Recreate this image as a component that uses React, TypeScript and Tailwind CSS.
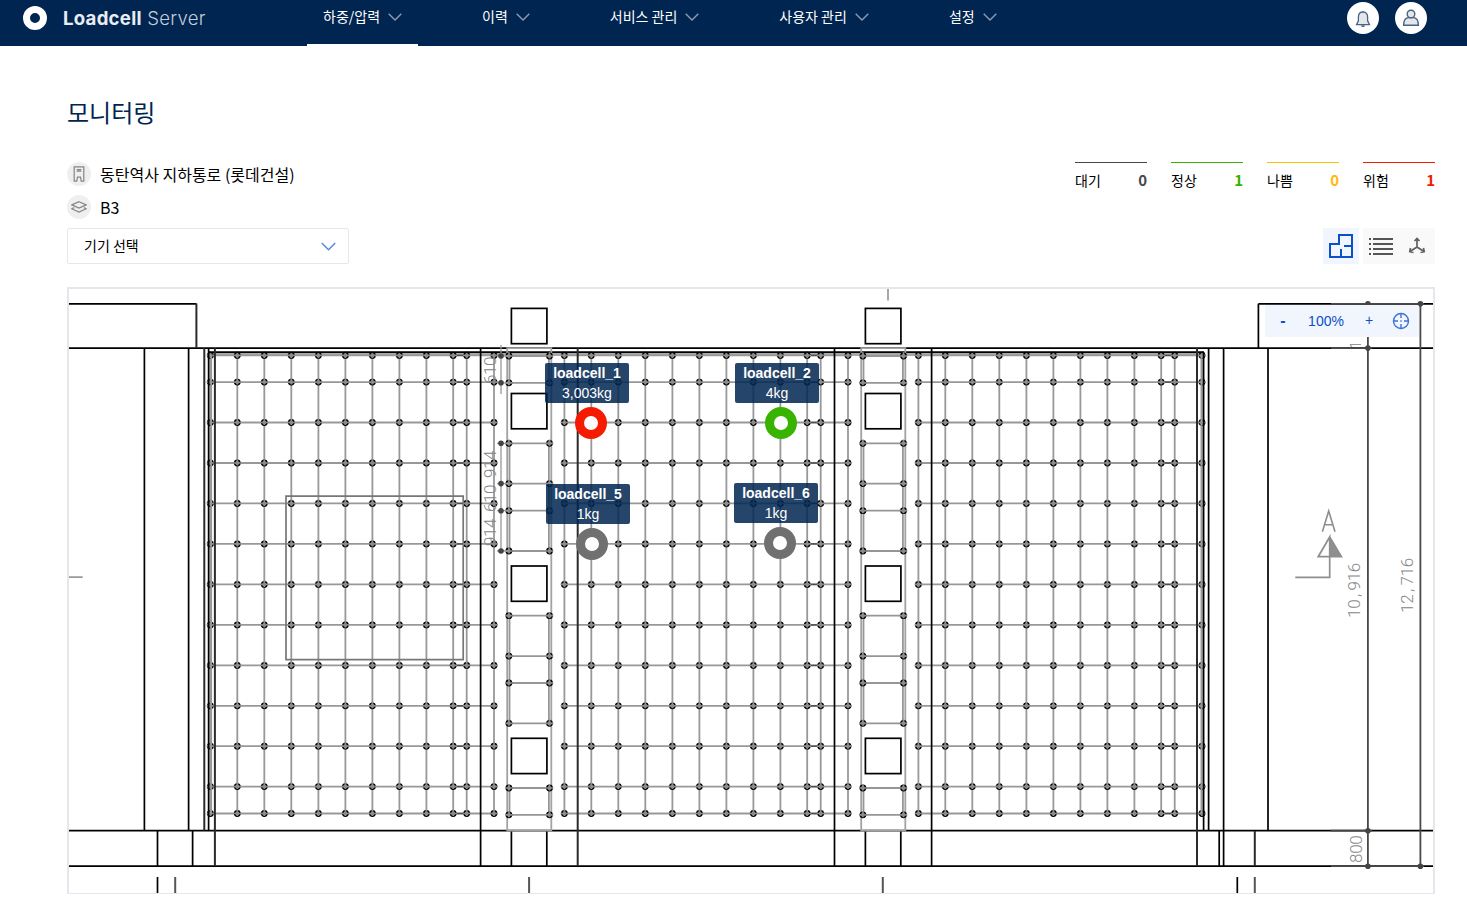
import React from 'react';

const NAV = [
  { label: '하중/압력', active: true },
  { label: '이력', active: false },
  { label: '서비스 관리', active: false },
  { label: '사용자 관리', active: false },
  { label: '설정', active: false },
];

const STATS = [
  { label: '대기', value: 0, border: 'border-[#44474d]', text: 'text-[#44474d]' },
  { label: '정상', value: 1, border: 'border-[#38b000]', text: 'text-[#38b000]' },
  { label: '나쁨', value: 0, border: 'border-[#ffc107]', text: 'text-[#ffb90a]' },
  { label: '위험', value: 1, border: 'border-[#f51b00]', text: 'text-[#f51b00]' },
];

const SENSORS = [
  { name: 'loadcell_1', value: '3,003kg', box: 'left-[476px] top-[74px]', ring: 'border-[#f61a00]' },
  { name: 'loadcell_2', value: '4kg', box: 'left-[666px] top-[74px]', ring: 'border-[#38b300]' },
  { name: 'loadcell_5', value: '1kg', box: 'left-[477px] top-[195px]', ring: 'border-[#707070]' },
  { name: 'loadcell_6', value: '1kg', box: 'left-[665px] top-[194px]', ring: 'border-[#707070]' },
];

const GRID_COLS = [210.4, 237.3, 264.3, 291.3, 318.4, 345.4, 372.4, 399.4, 426.4, 453.2, 466.7, 494];
const GRID_ROWS = [355.4, 382.1, 422.5, 463, 503.4, 543.9, 584.4, 624.9, 665.4, 705.8, 746.2, 786.6, 813.5];
const STRIP_GROUPS = [
  [356, 382.8],
  [443.3, 483.6, 510.7, 551],
  [615.7, 656.1, 683, 723.3],
  [788, 814.8],
];
const STRIP_SQUARES = [308.4, 393.5, 566, 738.3];
const BAY = 354;

function Chevron({ className, w = 14, h = 8 }: { className: string; w?: number; h?: number }) {
  return (
    <svg className={className} width={w} height={h} viewBox="0 0 14 8" fill="none" stroke="currentColor" strokeWidth="1.4">
      <path d="M0.7 0.7 7 7 13.3 0.7" />
    </svg>
  );
}

function Node({ x, y }: { x: number; y: number }) {
  return (
    <g>
      <circle cx={x} cy={y} r="2.7" fill="#8f8f8f" stroke="#000" strokeWidth="1.4" />
      <path d={`M${x - 3.8} ${y}H${x + 3.8}M${x} ${y - 3.8}V${y + 2.5}`} stroke="#8c8c8c" strokeWidth="1.7" />
    </g>
  );
}

// Drafting-style dimension text: every character takes the same advance.
function Dim({ x, y, len, text }: { x: number; y: number; len: number; text: string }) {
  const advance = len / text.length;
  const xs = text
    .split('')
    .map((ch, i) => (i * advance + (ch === ',' ? 2.8 : 0)).toFixed(2))
    .join(' ');
  return (
    <text
      transform={`translate(${x} ${y}) rotate(-90)`}
      x={xs}
      fontSize="17"
      fontWeight="300"
      fontFamily="Roboto, sans-serif"
      fill="#868686"
    >
      {text}
    </text>
  );
}

function Bay({ dx }: { dx: number }) {
  const cols = GRID_COLS.map((c) => c + dx);
  const x0 = cols[0];
  const x1 = cols[cols.length - 1];
  return (
    <g>
      <g stroke="#989898" strokeWidth="1.8">
        {cols.map((x) => (
          <path key={x} d={`M${x} 355V814`} />
        ))}
        {GRID_ROWS.map((y) => (
          <path key={y} d={`M${x0 - 3} ${y}H${x1 + 3}`} />
        ))}
      </g>
      {GRID_ROWS.map((y) => (
        <path key={y} d={`M${cols[9]} ${y}H${cols[10]}`} stroke="#4d4d4d" strokeWidth="1.5" />
      ))}
      {GRID_ROWS.map((y) => cols.map((x) => <Node key={`${x}-${y}`} x={x} y={y} />))}
    </g>
  );
}

function Strip({ dx }: { dx: number }) {
  const l = 508.9 + dx;
  const r = 549.5 + dx;
  return (
    <g>
      <path d={`M${l - 1.7} 348.2H${r + 1.8}V830.5H${l - 1.7}Z`} stroke="#a2a2a2" strokeWidth="1.8" />
      {STRIP_GROUPS.map((ys) => (
        <g key={ys[0]}>
          <g stroke="#969696" strokeWidth="1.8">
            <path d={`M${l + 0.6} ${ys[0]}V${ys[ys.length - 1]}M${r - 0.6} ${ys[0]}V${ys[ys.length - 1]}`} />
            {ys.map((y) => (
              <path key={y} d={`M${l} ${y}H${r}`} />
            ))}
          </g>
          {ys.map((y) => (
            <g key={y}>
              <Node x={l} y={y} />
              <Node x={r} y={y} />
            </g>
          ))}
        </g>
      ))}
      {STRIP_SQUARES.map((y) => (
        <rect key={y} x={511.4 + dx} y={y} width="35.5" height="35.3" stroke="#000" strokeWidth="1.7" />
      ))}
    </g>
  );
}

function FloorPlan() {
  return (
    <svg className="block h-full w-full" viewBox="69 289 1364 604" fill="none">
      <path d="M209 354.3H1203" stroke="#a8a8a8" strokeWidth="3.6" />
      <Bay dx={0} />
      <Bay dx={BAY} />
      <Bay dx={BAY * 2} />
      <g stroke="#000" strokeWidth="1.7">
        <path d="M69 303.8H196.5M1258.4 303.8H1433M69 348.1H1433M208 352.1H1204M69 830.7H1433M69 866.2H1433" />
        <path d="M144.4 348V830.5M188.6 348V830.5M208.6 348V830.5M157.5 831V866M192.6 831V866M157.5 877V893" />
        <path d="M480.6 348V866M834.5 348V866M931.6 348V866M511.4 831V866M546.8 831V866M865.4 831V866M900.8 831V866" />
        <path d="M1203.6 352V830.5M1208.6 348V830.5M1223.6 348V866M1268 348V830.5M1237.3 877V893M1258.4 303.8V348M1219.2 831V866" />
      </g>
      <g stroke="#2b2b2b" strokeWidth="2">
        <path d="M196.4 303.5V348M204.3 348V830.5M214.9 348V866M577.7 348V866M1197 348V866M1254.8 831V866" />
        <path d="M175.2 877V893M529.1 877V893M882.8 877V893M1254.8 877V893" stroke="#555" />
      </g>
      <path d="M1201.4 355V814M211.2 355V814" stroke="#999" strokeWidth="1.8" />
      <Strip dx={0} />
      <Strip dx={BAY} />
      <path d="M888 289V300.5M69 577.2H82.7" stroke="#999" strokeWidth="1.7" />
      <path d="M286 496.2H463.2V659.6H286Z" stroke="#777" strokeWidth="1.7" />

      <path d="M501 345V394M501 443V551M497 356H509M497 382.8H509M497 443.3H509M497 483.6H509M497 510.7H509M497 551H509" stroke="#999" strokeWidth="1.3" />
      {[356, 382.8, 443.3, 483.6, 510.7, 551].map((y) => (
        <circle key={y} cx="501" cy={y} r="2.8" fill="#444" />
      ))}
      <Dim x={495.6} y={384} len={27} text="610" />
      <Dim x={495.6} y={478} len={27} text="914" />
      <Dim x={495.6} y={512} len={27} text="610" />
      <Dim x={495.6} y={546} len={27} text="914" />

      <g stroke="#484848" strokeWidth="1.8">
        <path d="M1367.9 303.8V866M1420.4 303.8V866M1331 303.8H1424M1331 348.1H1372M1331 830.7H1372M1331 866.2H1424" />
      </g>
      {[
        [1367.9, 303.8],
        [1420.4, 303.8],
        [1367.9, 348.1],
        [1367.9, 830.7],
        [1367.9, 866.2],
        [1420.4, 866.2],
      ].map(([x, y]) => (
        <circle key={`${x}-${y}`} cx={x} cy={y} r="2.8" fill="#444" />
      ))}
      <Dim x={1359.6} y={618} len={55} text="10,916" />
      <Dim x={1412.6} y={613} len={55} text="12,716" />
      <Dim x={1362.3} y={863} len={27.5} text="800" />
      <path d="M1350 344.5H1361M1350 344.5L1352 347" stroke="#999" strokeWidth="1.2" />

      <path d="M1322.4 531.7 1328.7 511 1335 531.7M1324.5 524.8H1333" stroke="#8e8e8e" strokeWidth="1.6" />
      <path d="M1295.3 577.3H1329.7V537L1318.2 556.7H1341.4L1329.7 537" stroke="#8e8e8e" strokeWidth="1.7" />
      <path d="M1329.7 537V556.7H1341.4Z" fill="#8e8e8e" />
    </svg>
  );
}

export default function App() {
  return (
    <div className="flex h-[914px] w-full flex-col overflow-hidden bg-white font-['Noto_Sans_CJK_KR',sans-serif] text-black">
      <header className="flex h-[46px] shrink-0 bg-[#002550] text-white">
        <div className="flex h-9 w-[307px] items-center pl-[23px]">
          <span className="h-6 w-6 rounded-full border-[7px] border-white" />
          <span className="ml-[16px] whitespace-nowrap font-['Inter',sans-serif] text-[18.6px] font-light leading-6 tracking-[0.25px] text-[#c3cdd9]">
            <b className="font-bold text-[#e8edf3]">Loadcell</b> Server
          </span>
        </div>
        <nav className="flex gap-12">
          {NAV.map((n) => (
            <div
              key={n.label}
              className={`flex h-[46px] items-start gap-2 border-b-2 px-4 pt-[6px] ${n.active ? 'border-white' : 'border-transparent'}`}
            >
              <span className="whitespace-nowrap text-sm leading-5">{n.label}</span>
              <Chevron className="mt-[7px] text-[#8b9bb0]" />
            </div>
          ))}
        </nav>
        <div className="ml-auto mr-10 flex gap-4 pt-[2px]">
          <div className="flex h-8 w-8 items-center justify-center rounded-full bg-white">
            <svg className="mt-0.5" width="16" height="18" viewBox="0 0 16 18" fill="#e3e7ec" stroke="#4b6485" strokeWidth="1.3">
              <path d="M6.5 15.5C7 16.8 9 16.8 9.5 15.5" fill="#58708f" />
              <path d="M8 0.9V2M8 2C4.8 2 3.4 4.2 3.4 7V10.800L1.500 14.700H14.500L12.600 10.800V7C12.600 4.200 11.200 2 8 2Z" />
            </svg>
          </div>
          <div className="flex h-8 w-8 items-center justify-center rounded-full bg-white">
            <svg width="18" height="18" viewBox="0 0 18 18" fill="#e3e7ec" stroke="#4b6485" strokeWidth="1.4">
              <path d="M1.6 16.3C1.6 11.8 3.6 9 6.2 8.6H11.8C14.4 9 16.4 11.8 16.4 16.3Z" />
              <circle cx="9" cy="5" r="3.8" />
            </svg>
          </div>
        </div>
      </header>

      <main className="flex flex-col pl-[67px] pr-8">
        <h1 className="mt-12 h-9 text-2xl leading-9 text-[#002550]">모니터링</h1>

        <div className="mt-8 flex h-[102px] justify-between">
          <div className="flex flex-col">
            <div className="flex h-6 items-center gap-[9px]">
              <span className="flex h-6 w-6 items-center justify-center rounded-full bg-[#efefef]">
                <svg width="12" height="16" viewBox="0 0 12 16" fill="none" stroke="#858585" strokeWidth="1.2">
                  <path d="M1.2 15.2V0.8H10.8V15.2H8.200L7.500 11.200H4.500L3.800 15.200Z" />
                  <path d="M3.7 3.7H8.3M3.7 5.2H8.3" />
                </svg>
              </span>
              <span className="text-base leading-6">동탄역사 지하통로 (롯데건설)</span>
            </div>
            <div className="mt-[9px] flex h-6 items-center gap-[9px]">
              <span className="flex h-6 w-6 items-center justify-center rounded-full bg-[#efefef]">
                <svg width="16" height="12" viewBox="0 0 16 12" fill="none" stroke="#858585" strokeWidth="1.2">
                  <path d="M8 0.7 15.2 3.9 8 7.1 0.8 3.9Z" />
                  <path d="M3.2 6.6 0.8 7.8 8 11 15.2 7.8 12.8 6.6" />
                </svg>
              </span>
              <span className="text-base leading-6">B3</span>
            </div>
            <div className="mt-[9px] flex h-9 w-[282px] items-center justify-between rounded-[2px] border border-[#e4e7ec] pl-4 pr-3">
              <span className="pb-[2px] text-sm leading-5">기기 선택</span>
              <Chevron className="text-[#5b87df]" w={15} h={9} />
            </div>
          </div>

          <div className="flex flex-col items-end justify-between">
            <div className="flex gap-6">
              {STATS.map((s) => (
                <div key={s.label} className={`flex w-[72px] items-center justify-between border-t pt-[7px] ${s.border}`}>
                  <span className="text-sm leading-5">{s.label}</span>
                  <b className={`text-[15px] font-bold leading-5 ${s.text}`}>{s.value}</b>
                </div>
              ))}
            </div>
            <div className="flex">
              <div className="mr-1 flex h-9 w-9 items-center justify-center bg-[#f1f5fd]">
                <svg width="24" height="24" viewBox="0 0 24 24" fill="none" stroke="#0b50c8" strokeWidth="2">
                  <path d="M10 1H23V23H1V10H10ZM12 15V23M15 12H23" />
                </svg>
              </div>
              <div className="flex h-9 w-9 items-center justify-center bg-[#f9f9f9]">
                <svg width="24" height="18" viewBox="0 0 24 18" stroke="#555" strokeWidth="2">
                  <path d="M0 2H2M4 2H24M0 7H2M4 7H24M0 12H2M4 12H24M0 17H2M4 17H24" />
                </svg>
              </div>
              <div className="flex h-9 w-9 items-center justify-center bg-[#f9f9f9]">
                <svg width="18" height="18" viewBox="0 0 18 18" fill="none" stroke="#606060" strokeWidth="1.7">
                  <path d="M9 1.500V10M6.500 4 9 1.500 11.500 4M9 10 2 14.500M2.500 11 1.800 14.700 5.500 15.500M9 10 16 14.500M15.500 11 16.200 14.700 12.500 15.500" />
                </svg>
              </div>
            </div>
          </div>
        </div>

        <section className="relative mt-[23px] h-[607px] w-full border-2 border-b border-[#e4e7ec]">
          <FloorPlan />
          {SENSORS.map((s) => (
            <div key={s.name} className={`absolute flex w-[84px] flex-col items-center font-['Liberation_Sans',sans-serif] ${s.box}`}>
              <div className="h-10 w-full rounded-[2px] bg-[#002550]/85 text-center text-white">
                <div className="text-[14px] font-bold leading-5">{s.name}</div>
                <div className="text-[14px] leading-5">{s.value}</div>
              </div>
              <div className={`ml-2 mt-1 h-8 w-8 rounded-full border-[9px] bg-white ${s.ring}`} />
            </div>
          ))}
          <div className="absolute right-[14px] top-4 flex h-8 w-[154px] items-center rounded-[2px] bg-[#f1f5fd] font-['Liberation_Sans',sans-serif] text-sm text-[#0b50c8]">
            <span className="w-9 text-center text-base font-bold">-</span>
            <span className="w-[50px] text-center">100%</span>
            <span className="w-9 pb-[3px] text-center">+</span>
            <svg className="ml-[5px]" width="18" height="18" viewBox="0 0 18 18" fill="none" stroke="#3d73d3" strokeWidth="1.4">
              <circle cx="9" cy="9" r="7.500" />
              <path d="M9 1.500V6M9 12V16.500M1.500 9H6M12 9H16.500M8.300 9H9.700" />
            </svg>
          </div>
        </section>
      </main>
    </div>
  );
}
